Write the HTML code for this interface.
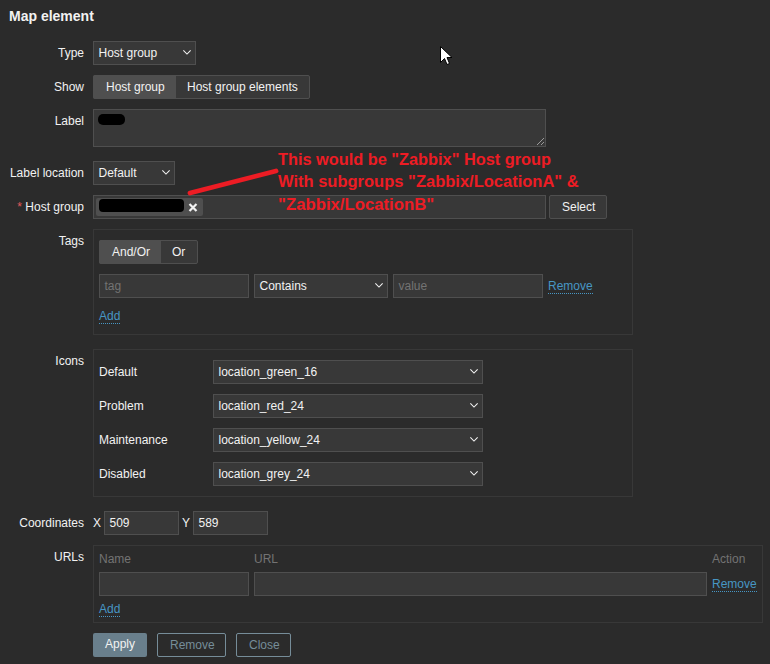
<!DOCTYPE html>
<html><head><meta charset="utf-8">
<style>
*{box-sizing:border-box;margin:0;padding:0}
html,body{width:770px;height:664px;overflow:hidden;background:#2b2b2b}
body{position:relative;font-family:"Liberation Sans",sans-serif;font-size:12px;color:#f2f2f2}
.a{position:absolute;white-space:nowrap}
.t{line-height:14px}
.lbl{position:absolute;right:686px;white-space:nowrap;line-height:14px;text-align:right}
.box{position:absolute;background:#383838;border:1px solid #4f4f4f}
.fs{position:absolute;border:1px solid #383838}
.sel{position:absolute;background:#383838;border:1px solid #4f4f4f}
.sel span,.box span{position:absolute;left:4.5px;top:4px;line-height:14px}
.chev{position:absolute;top:7px;width:10px;height:7px}
.link{position:absolute;color:#4796c4;line-height:14px;white-space:nowrap}
.link i{position:absolute;left:0;right:0;top:14px;height:1px;border-bottom:1px dotted #4796c4}
.ph{color:#737373}
.note{position:absolute;left:278px;color:#ed1c24;font-weight:bold;font-size:17px;line-height:20px;white-space:nowrap;transform-origin:0 0}
</style></head><body>
<div class="a t" style="left:9px;top:8px;font-size:14px;font-weight:bold;line-height:16px">Map element</div>

<!-- Type -->
<div class="lbl" style="top:46px">Type</div>
<div class="sel" style="left:93px;top:41px;width:103px;height:24px"><span>Host group</span>
<svg class="chev" style="left:88px" viewBox="0 0 11 7"><path d="M1.5 1.2 L5.5 5.2 L9.5 1.2" fill="none" stroke="#f2f2f2" stroke-width="1.2"/></svg></div>

<!-- Show -->
<div class="lbl" style="top:80px">Show</div>
<div class="a" style="left:93px;top:75px;width:217px;height:24px;border:1px solid #4f4f4f;border-radius:2px;background:#383838">
  <div class="a" style="left:-1px;top:-1px;width:83px;height:24px;background:#4f4f4f;border-radius:2px 0 0 2px"></div>
  <div class="a t" style="left:12px;top:4px">Host group</div>
  <div class="a t" style="left:93px;top:4px">Host group elements</div>
</div>

<!-- Label -->
<div class="lbl" style="top:114px">Label</div>
<div class="box" style="left:93px;top:109px;width:453px;height:38px">
  <div class="a" style="left:4px;top:4px;width:27px;height:11px;background:#000;border-radius:5px"></div>
  <svg class="a" style="left:441px;top:26px" width="10" height="10" viewBox="0 0 10 10"><path d="M2 9 L9 2 M6 9 L9 6" stroke="#9a9a9a" stroke-width="1"/></svg>
</div>

<!-- Label location -->
<div class="lbl" style="top:166px">Label location</div>
<div class="sel" style="left:93px;top:161px;width:82px;height:24px"><span>Default</span>
<svg class="chev" style="left:67px" viewBox="0 0 11 7"><path d="M1.5 1.2 L5.5 5.2 L9.5 1.2" fill="none" stroke="#f2f2f2" stroke-width="1.2"/></svg></div>

<!-- Host group -->
<div class="lbl" style="top:200px"><span style="color:#e45959">*</span> Host group</div>
<div class="box" style="left:93px;top:195px;width:453px;height:24px">
  <div class="a" style="left:2px;top:2px;width:107px;height:18px;background:#4f4f4f;border-radius:2px"></div>
  <div class="a" style="left:5px;top:3px;width:85px;height:13px;background:#000;border-radius:4px"></div>
  <svg class="a" style="left:94px;top:7px" width="10" height="9" viewBox="0 0 10 9"><path d="M1.5 1 L8.5 8 M8.5 1 L1.5 8" stroke="#f2f2f2" stroke-width="2.2"/></svg>
</div>
<div class="a" style="left:549px;top:195px;width:58px;height:24px;background:#383838;border:1px solid #4f4f4f;border-radius:2px"><span class="a t" style="left:12px;top:4px">Select</span></div>

<!-- Tags -->
<div class="lbl" style="top:234px">Tags</div>
<div class="fs" style="left:93px;top:229px;width:540px;height:106px"></div>
<div class="a" style="left:99px;top:240px;width:99px;height:24px;border:1px solid #4f4f4f;border-radius:2px;background:#383838">
  <div class="a" style="left:-1px;top:-1px;width:62px;height:24px;background:#4f4f4f;border-radius:2px 0 0 2px"></div>
  <div class="a t" style="left:12px;top:4px">And/Or</div>
  <div class="a t" style="left:72px;top:4px">Or</div>
</div>
<div class="box" style="left:99px;top:274px;width:150px;height:24px"><span class="ph">tag</span></div>
<div class="sel" style="left:254px;top:274px;width:134px;height:24px"><span>Contains</span>
<svg class="chev" style="left:119px" viewBox="0 0 11 7"><path d="M1.5 1.2 L5.5 5.2 L9.5 1.2" fill="none" stroke="#f2f2f2" stroke-width="1.2"/></svg></div>
<div class="box" style="left:393px;top:274px;width:150px;height:24px"><span class="ph">value</span></div>
<div class="link" style="left:548px;top:279px">Remove<i></i></div>
<div class="link" style="left:99px;top:309px">Add<i></i></div>

<!-- Icons -->
<div class="lbl" style="top:354px">Icons</div>
<div class="fs" style="left:93px;top:349px;width:540px;height:148px"></div>
<div class="a t" style="left:99px;top:365px">Default</div>
<div class="sel" style="left:213px;top:360px;width:270px;height:24px"><span>location_green_16</span>
<svg class="chev" style="left:255px" viewBox="0 0 11 7"><path d="M1.5 1.2 L5.5 5.2 L9.5 1.2" fill="none" stroke="#f2f2f2" stroke-width="1.2"/></svg></div>
<div class="a t" style="left:99px;top:399px">Problem</div>
<div class="sel" style="left:213px;top:394px;width:270px;height:24px"><span>location_red_24</span>
<svg class="chev" style="left:255px" viewBox="0 0 11 7"><path d="M1.5 1.2 L5.5 5.2 L9.5 1.2" fill="none" stroke="#f2f2f2" stroke-width="1.2"/></svg></div>
<div class="a t" style="left:99px;top:433px">Maintenance</div>
<div class="sel" style="left:213px;top:428px;width:270px;height:24px"><span>location_yellow_24</span>
<svg class="chev" style="left:255px" viewBox="0 0 11 7"><path d="M1.5 1.2 L5.5 5.2 L9.5 1.2" fill="none" stroke="#f2f2f2" stroke-width="1.2"/></svg></div>
<div class="a t" style="left:99px;top:467px">Disabled</div>
<div class="sel" style="left:213px;top:462px;width:270px;height:24px"><span>location_grey_24</span>
<svg class="chev" style="left:255px" viewBox="0 0 11 7"><path d="M1.5 1.2 L5.5 5.2 L9.5 1.2" fill="none" stroke="#f2f2f2" stroke-width="1.2"/></svg></div>

<!-- Coordinates -->
<div class="lbl" style="top:516px">Coordinates</div>
<div class="a t" style="left:93px;top:516px">X</div>
<div class="box" style="left:104px;top:511px;width:75px;height:24px"><span>509</span></div>
<div class="a t" style="left:182px;top:516px">Y</div>
<div class="box" style="left:193px;top:511px;width:75px;height:24px"><span>589</span></div>

<!-- URLs -->
<div class="lbl" style="top:550px">URLs</div>
<div class="fs" style="left:93px;top:545px;width:670px;height:78px"></div>
<div class="a t ph" style="left:99px;top:552px">Name</div>
<div class="a t ph" style="left:254px;top:552px">URL</div>
<div class="a t ph" style="left:712px;top:552px">Action</div>
<div class="box" style="left:99px;top:572px;width:150px;height:24px"></div>
<div class="box" style="left:254px;top:572px;width:453px;height:24px"></div>
<div class="link" style="left:712px;top:577px">Remove<i></i></div>
<div class="link" style="left:99px;top:602px">Add<i></i></div>

<!-- Buttons -->
<div class="a" style="left:93px;top:633px;width:54px;height:24px;background:#697f8c;border-radius:2px"><span class="a t" style="left:12px;top:4px">Apply</span></div>
<div class="a" style="left:157px;top:633px;width:69px;height:24px;border:1px solid #768d99;border-radius:2px;color:#768d99"><span class="a t" style="left:12px;top:4px">Remove</span></div>
<div class="a" style="left:236px;top:633px;width:55px;height:24px;border:1px solid #768d99;border-radius:2px;color:#768d99"><span class="a t" style="left:12px;top:4px">Close</span></div>

<!-- Annotation -->
<svg class="a" style="left:0;top:0" width="770" height="664"><line x1="190" y1="193" x2="276" y2="171" stroke="#ed1c24" stroke-width="4.8" stroke-linecap="round"/></svg>
<div class="note" id="n1" style="top:150px;transform:scaleX(0.96)">This would be "Zabbix" Host group</div>
<div class="note" id="n2" style="top:172px;transform:scaleX(0.971)">With subgroups "Zabbix/LocationA" &amp;</div>
<div class="note" id="n3" style="top:195px;transform:scaleX(0.984)">"Zabbix/LocationB"</div>

<!-- Cursor -->
<svg class="a" style="left:440px;top:46px" width="13" height="20" viewBox="0 0 13 20"><path d="M0.5 0.5 L0.5 16.5 L4.5 12.5 L7 18.5 L9.5 17.5 L7 11.5 L12 11.5 Z" fill="#fff" stroke="#000" stroke-width="1"/></svg>
</body></html>
